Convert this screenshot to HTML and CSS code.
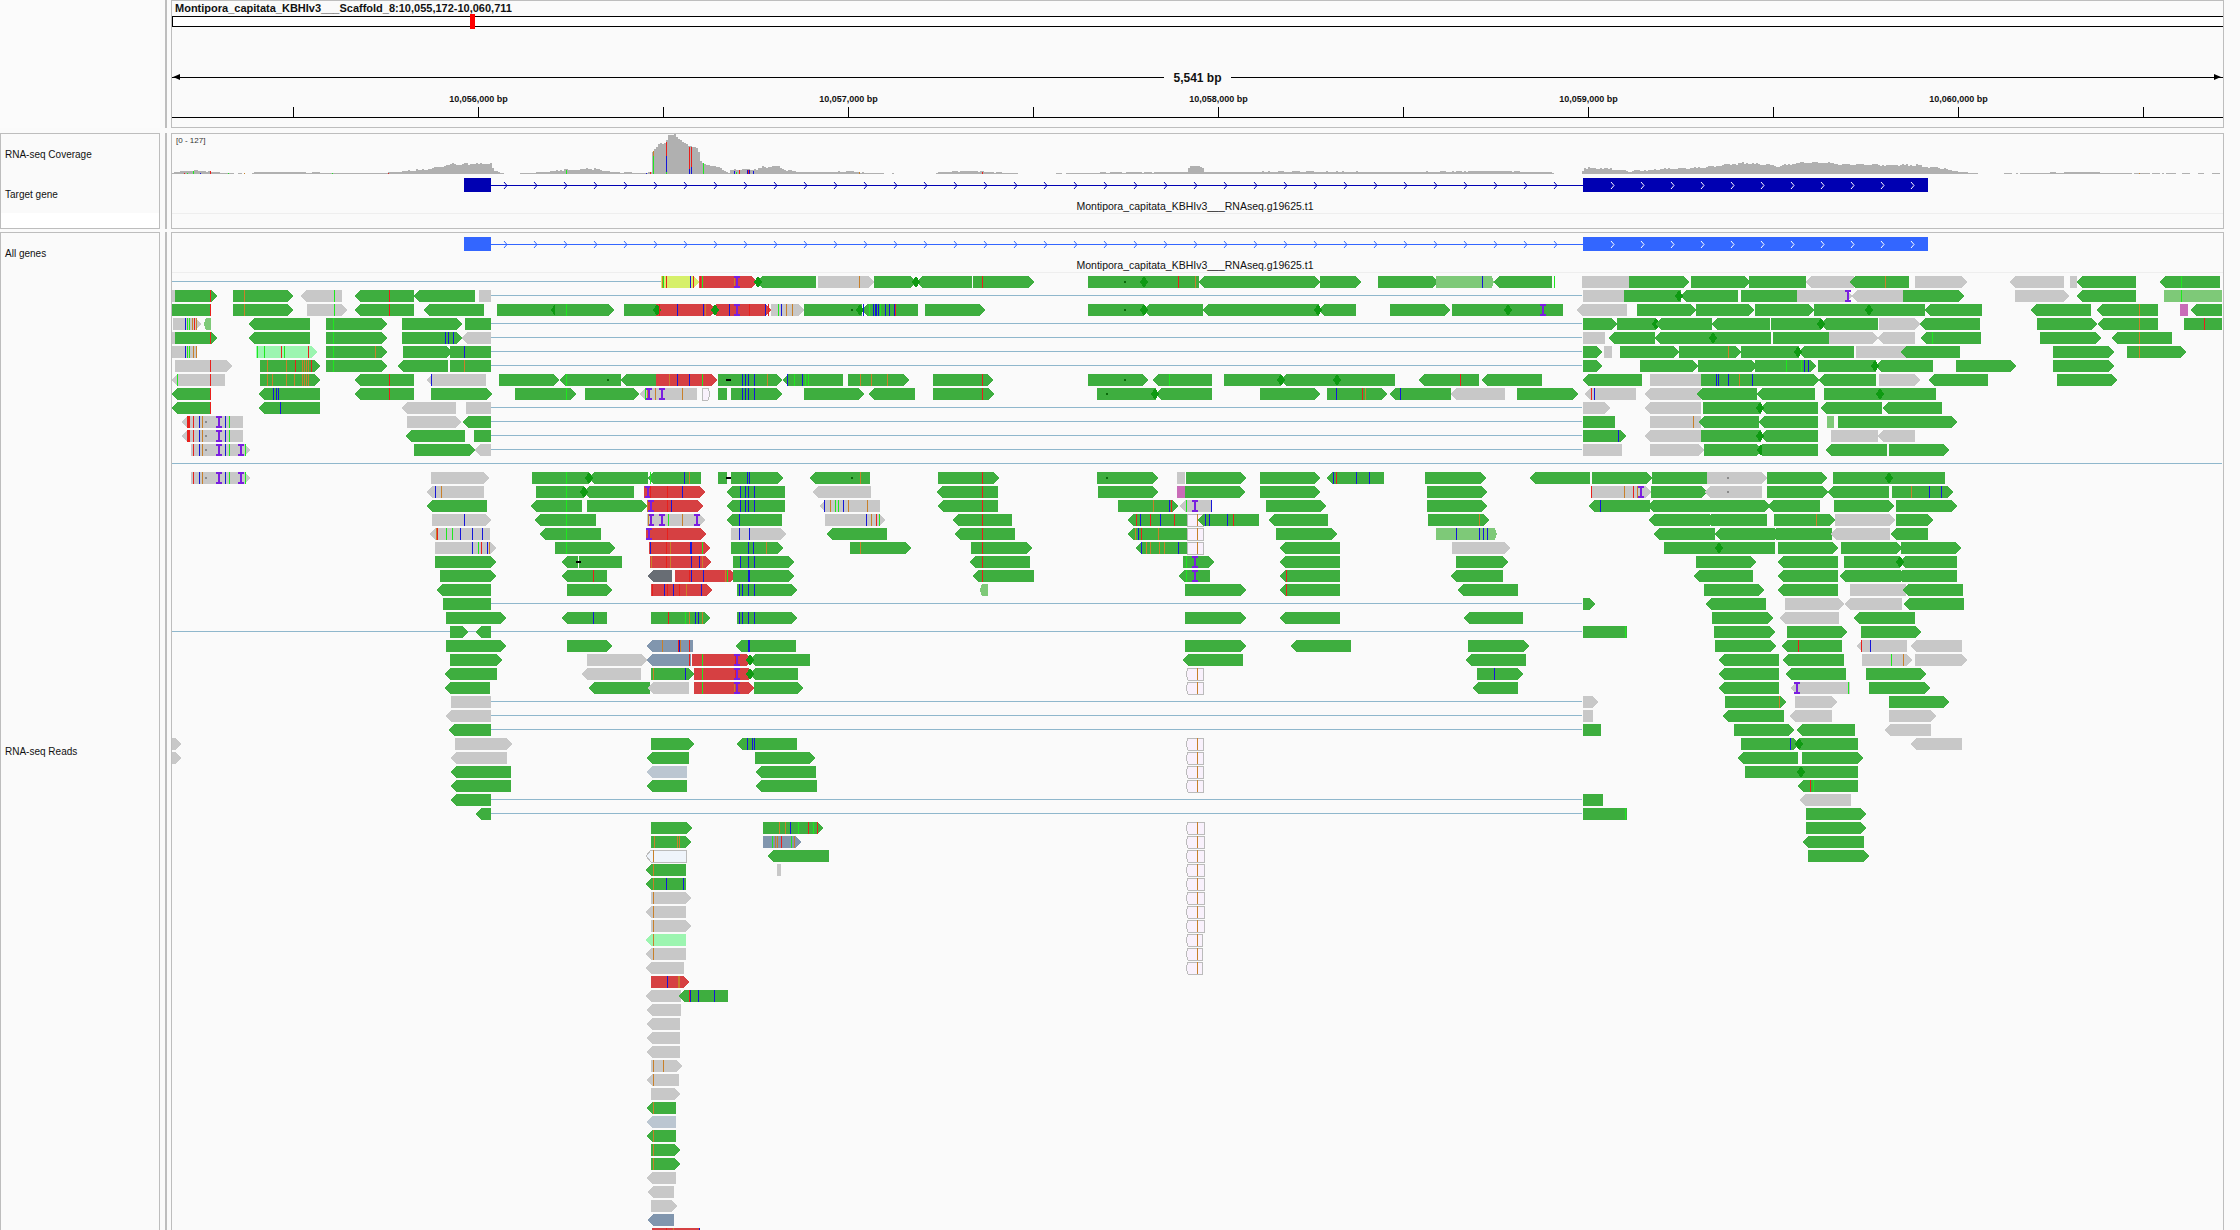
FILE: index.html
```html
<!DOCTYPE html>
<html lang="en">
<head>
<meta charset="utf-8">
<title>IGV</title>
<link rel="stylesheet" href="styles.css">
</head>
<body>
<main class="igv">
  <section class="row row--header">
    <div class="names names--plain"></div>
    <div class="splitter"></div>
    <div class="panel">
      <div class="locus">Montipora_capitata_KBHIv3___Scaffold_8:10,055,172-10,060,711</div>
      <div class="ideogram"><span class="ideogram-mark"></span></div>
      <div class="span">
        <span class="span-line span-line--left"></span>
        <span class="span-label">5,541 bp</span>
        <span class="span-line span-line--right"></span>
      </div>
      <svg class="ruler" viewBox="172 84 2051 34" aria-label="ruler">
        <g class="ruler-text">
          <text x="478.5" y="102">10,056,000 bp</text>
          <text x="848.5" y="102">10,057,000 bp</text>
          <text x="1218.5" y="102">10,058,000 bp</text>
          <text x="1588.5" y="102">10,059,000 bp</text>
          <text x="1958.5" y="102">10,060,000 bp</text>
        </g>
        <path class="ruler-line" d="M293.5 107V117M478.5 107V117M663.5 107V117M848.5 107V117M1033.5 107V117M1218.5 107V117M1403.5 107V117M1588.5 107V117M1773.5 107V117M1958.5 107V117M2143.5 107V117M172 117.5H2223"/>
      </svg>
    </div>
  </section>

  <section class="row row--genes">
    <div class="names names--boxed">
      <div class="name-row">RNA-seq Coverage</div>
      <div class="name-row">Target gene</div>
      <div class="name-rest"></div>
    </div>
    <div class="splitter"></div>
    <div class="panel">
      <div class="coverage">
        <span class="coverage-range">[0 - 127]</span>
        <svg id="coverage" class="track-svg" viewBox="172 134 2051 40"></svg>
      </div>
      <div class="gene-track">
        <svg id="target-gene" class="track-svg" data-y="174" viewBox="172 174 2051 39"></svg>
      </div>
    </div>
  </section>

  <section class="row row--reads">
    <div class="names names--boxed">
      <div class="name-row">All genes</div>
      <div class="name-grow">RNA-seq Reads</div>
    </div>
    <div class="splitter"></div>
    <div class="panel">
      <div class="gene-track">
        <svg id="all-genes" class="track-svg" data-y="233" viewBox="172 233 2051 39"></svg>
      </div>
      <svg id="reads" class="reads" viewBox="172 273 2051 957"></svg>
    </div>
  </section>
</main>
<script src="reads.js"></script>
</body>
</html>
```
FILE: styles.css
```css
* { box-sizing: border-box; }
html, body { margin: 0; height: 100%; overflow: hidden; background: #fafafa; }
body { font-family: "Liberation Sans", Arial, sans-serif; color: #111; }
.igv { display: flex; flex-direction: column; width: 2240px; height: 1230px; overflow: hidden; }
.row { display: flex; flex: none; }
.row--header { height: 128px; margin-bottom: 5px; }
.row--genes { height: 96px; margin-bottom: 3px; }
.row--reads { height: 1000px; }

.names { width: 160px; flex: none; display: flex; flex-direction: column; font-size: 10px; }
.names--plain { background: #fbfbfb; }
.names--boxed { border: 1px solid #bdbdbd; }
.name-row { height: 40px; flex: none; display: flex; align-items: center; padding-left: 4px; }
.name-rest { flex: 1; background: #fff; margin-top: -1px; }
.name-grow { height: 957px; flex: none; display: flex; align-items: center; padding-left: 4px; }

.splitter { width: 2px; flex: none; margin: 0 4px 0 5px; background: #bdbdbd; }
.panel { width: 2053px; flex: none; border: 1px solid #bdbdbd; overflow: hidden; }

.locus { height: 14px; line-height: 14px; padding-left: 3px; font-size: 11px; font-weight: 700; margin-bottom: 1px; }
.ideogram { position: relative; height: 11px; background: #fff; border: 1px solid #000; border-right: 0; }
.ideogram-mark { position: absolute; left: 297px; top: -3px; width: 5px; height: 15px; background: #f00; }

.span { display: flex; align-items: center; height: 13px; margin-top: 44px; }
.span-line { position: relative; height: 1px; background: #000; }
.span-line--left { flex: 0 0 992px; }
.span-line--right { flex: 1; }
.span-line--left::before, .span-line--right::after {
  content: ""; position: absolute; top: -3px; border: 3.5px solid transparent;
}
.span-line--left::before { left: 1px; border-left-width: 0; border-right: 7px solid #000; }
.span-line--right::after { right: 2px; border-right-width: 0; border-left: 7px solid #000; }
.span-label { flex: 0 0 67px; text-align: center; font-size: 12px; font-weight: 700; line-height: 13px; padding-top: 2px; }

.ruler { display: block; width: 2051px; height: 34px; }
.ruler-text { font-size: 9px; font-weight: 700; text-anchor: middle; fill: #111; }
.ruler-line { stroke: #000; stroke-width: 1; fill: none; }

.coverage { position: relative; height: 40px; }
.coverage-range { position: absolute; left: 4px; top: 1px; font-size: 8px; line-height: 11px; color: #333; }
.track-svg { display: block; width: 2051px; height: 100%; shape-rendering: crispEdges; }
.gene-track { height: 40px; border-bottom: 1px solid #eee; }
.gene-name { font-size: 10.5px; text-anchor: middle; fill: #111; }

.reads { display: block; width: 2051px; height: 957px; shape-rendering: crispEdges; }

.cov { fill: #b0b0b0; }
.target .exon { fill: #0000b2; }
.target .intron, .target .chev { stroke: #0000b2; }
.all .exon { fill: #3366ff; }
.all .intron, .all .chev { stroke: #3366ff; }
.intron { stroke-width: 1; fill: none; }
.chev { stroke-width: 1; fill: none; shape-rendering: auto; }
.chev--in { stroke: #fff !important; }
.skip { stroke: #8fb7cc; stroke-width: 1; }

.c-g { fill: #3eae3f; }
.c-y { fill: #c8c8c8; }
.c-r { fill: #d64042; }
.c-Y { fill: #d6f06a; }
.c-L { fill: #7ec978; }
.c-M { fill: #9cf5b0; }
.c-s { fill: #8196ae; }
.c-S { fill: #bbc6d1; }
.c-K { fill: #686d74; }
.c-P { fill: #c96cb8; }
.c-O { fill: #f9f1fc; stroke: #bbb; stroke-width: 1; }
.c-W { fill: #eff4fb; stroke: #bbb; stroke-width: 1; }

.m-r { fill: #e8201c; }
.m-b { fill: #1616d8; }
.m-G { fill: #1fe81f; }
.m-o { fill: #c8802a; }
.m-x { fill: #000; }
.m-d { fill: #0a6a0a; }
.m-y { fill: #8a8a8a; }
.m-I { fill: #7a1ee0; }
.m-D { fill: #0e9a12; }
```
FILE: reads.js
```js
// Alignment data: one block per horizontal window. Each row holds reads as
// "start end direction colour marks...", using the window's own coordinates.
var BLOCKS = [
  { x0: 600, s: 3, rows: {
    0: "183 297 > Y o185 G190 r198 b270 r278|297 472 > r r300 G307 o403 I410|470 648 < g D473|654 822 > y o778|822 948 > g|950 1116 < g D948|1119 1302 > g r1147"
  }},
  { x0: 160, s: 2.24, rows: {
    1: "27 40 - y|34 128 > g r112|164 298 > g o188|316 408 < y G389|436 569 < g r512|569 706 < g|715 741 - y",
    2: "27 114 - g r112|164 298 > g o188|329 419 > y G389|436 569 < g r512|592 726 < g|755 885 - g D885|885 1017 > g G910|1039 1112 - g|1112 1245 > r D1113 r1117 b1159 b1217 o1220|1245 1368 > r D1243 b1275 I1292 r1320 b1355 r1362|1368 1443 > y G1385 b1392 o1402 o1415|1443 1572 - g d1549",
    3: "29 92 > y b55 G60 G64 o72 r76 o80|98 114 < L|200 336 < g|372 508 > g G388|542 676 > g|683 741 - g",
    4: "27 40 - y|34 128 > g r112|200 336 < g|372 508 > g G388|542 676 > g b638 b646 b656|677 741 < y",
    5: "27 82 - y b55 G60 G66 o75 o80|215 352 > M G218 G233 r270 G277 r332|372 508 > g G388 o482|544 655 > g|650 741 - g b682",
    6: "34 161 > y r111|224 358 > g o240 o282 r303 o318 o322 o326 o332 r339|372 508 > g G388|534 645 < g|650 741 - g o682",
    7: "27 146 < y G39 r111|224 358 > g o240 o250 o282 o300 o318 o322 o326 o332|436 569 < g r512|597 730 < y b607|759 894 > g|897 1033 < g G910 d1004|1033 1110 < g|1111 1248 > r o1141 b1159 b1186 G1215|1250 1270 - g|1267 1279 - g|1279 1393 > g b1303 b1311 b1318 b1330 o1360|1396 1530 < g b1405 G1420 b1437 G1445 G1452 x1273",
    8: "27 114 < g r112|222 358 < g b253 b259 b265|436 569 < g r512|607 744 > g|795 932 > g G910|952 1073 > g|1075 1203 < y o1090 G1086 I1095 o1108 I1125 o1170|1215 1233 > O|1250 1270 - g|1279 1393 > g b1303 b1311 b1318 b1330|1443 1577 > g",
    9: "27 114 < g r112|222 358 < g b269|541 663 < y|685 741 - y",
    10: "50 186 < y r60 r63 r66 r74 b88 o95 y104 I132 b145 G155|553 675 > y|679 741 < g",
    11: "50 186 < y r60 r63 r66 r74 b88 o95 y104 I132 b145 G155|550 683 < g|703 741 - g",
    12: "69 202 > y r74 b88 o95 y104 I132 b145 G155 I182 G190|569 706 > g|706 741 < y",
    14: "69 202 > y r74 b88 o95 y104 I132 b145 G155 I182 G190|607 737 > y|833 960 - g G910|960 1092 < g D962|1092 1212 < g G1098 b1173 o1184|1250 1270 - g|1279 1396 > g b1315 b1320 x1273|1455 1590 < g d1549 o1567",
    15: "597 726 < y b615 o630|842 950 - g G910|950 1062 < g D950|1085 1221 > r I1092 r1097 r1135 b1170|1270 1400 < g b1300 b1310 b1318 b1330|1463 1593 < y",
    16: "598 732 < g|832 945 < g G910|956 1090 > g|1090 1216 > r I1100 o1090 r1135 b1145|1270 1400 < g b1300 b1310 b1318 b1330|1478 1613 < y b1488 o1500 G1512 G1518 b1531 o1542 o1583",
    17: "609 741 > y b682|840 977 < g G910|1090 1220 > y I1100 o1093 I1125 G1138 o1170 I1203|1270 1393 < g b1298|1490 1624 > y b1581 o1593 r1603 G1610",
    18: "604 739 < y o618 r620 G640 G655 b672 b700 b722|852 988 < g G910|1088 1223 > r I1095 r1135|1279 1402 > y b1298 b1320|1495 1628 < g o1567",
    19: "616 752 > y b700 G712 o718 r720 b732 o738|885 1019 > g G910|1095 1232 > r b1097 r1134 o1143 b1187 b1190 G1215|1279 1396 > g b1316 b1328 o1358",
    20: "616 752 > g|901 936 < g|939 1035 - g x937|1098 1234 > r o1100 r1134 o1143 b1190 b1208 o1215|1284 1420 > g b1300 b1318 b1330",
    21: "627 752 > g|901 1001 < g r969|1094 1147 < K|1154 1290 > r r1185 b1190 b1217 o1265 G1270|1284 1420 > g b1316 b1320",
    22: "621 741 < g|912 1012 > g|1100 1236 > r r1101 b1128 r1135 b1148 r1163 o1178 b1211|1292 1427 > g b1297 b1298 b1303 b1318 b1330",
    23: "634 741 - g",
    24: "641 775 > g|901 1001 < g b969|1100 1232 > g r1139 G1175 o1185 b1198 b1205 o1215|1292 1427 > g b1297 b1298 b1303 b1318 b1330",
    25: "650 690 > g|707 741 < g",
    26: "641 775 > g|912 1012 > g|1090 1194 < s o1125 r1160 b1163 o1165 r1184|1290 1425 < g b1316 b1320",
    27: "650 765 > g|956 1090 > y|1090 1189 < s r1186|1192 1326 > r r1213 G1215 r1287 I1292|1322 1456 < g D1322",
    28: "639 755 < g|946 1077 < y|1100 1196 > g o1105 b1177|1196 1330 > r r1213 G1215 r1287 I1292|1322 1429 < g D1322",
    29: "639 739 < g|962 1097 < g|1092 1185 < y|1196 1331 > r r1213 G1215 o1285 I1292|1331 1440 > g",
    30: "652 741 - y",
    31: "641 741 < y",
    32: "648 741 < g",
    33: "27 46 > y|661 788 > y|1100 1196 > g|1293 1427 < g b1314 b1325 b1330",
    34: "27 46 > y|651 777 < y|1090 1185 < g|1333 1467 > g",
    35: "652 786 < g|1090 1180 < S|1334 1469 < g",
    36: "652 786 < g|1090 1180 < g|1336 1472 < g",
    37: "652 741 < g",
    38: "707 741 < g"
  }},
  { x0: 840, s: 2.24, rows: {
    0: "556 682 - g d638|682 805 - g D682 r758 o795|805 940 < g|940 1075 > g|1075 1167 > g|1205 1340 > g|1335 1465 > L b1437|1465 1595 < g G1600",
    2: "50 175 < g D45 b52 G64 b75 b78 b81 b84 G90 b100 b110 b120 r123|190 325 > g|556 682 - g d638|682 812 < g D682|812 940 < g|940 1072 - g|1072 1156 < g D1070|1232 1366 > g|1371 1620 - g D1496 I1575",
    7: "18 155 > g o44 o70 o106|208 343 > g r319|556 690 > g d638|700 833 < g G736|860 988 - g|988 1117 < g D988|1117 1243 - g D1113|1298 1431 < g r1388|1437 1572 < g",
    8: "0 54 > g|65 168 < g|208 345 > g r319|576 708 - g d598|708 833 < g D706|941 1075 > g|1091 1225 > g b1111 r1170 o1175|1233 1369 < g b1255|1369 1490 < y",
    14: "220 356 > g r319|576 712 > g d598|755 773 - y|775 909 > g|941 1075 > g|1090 1219 < g b1105 r1111 b1155 b1186|1310 1447 > g",
    15: "0 69 - y|218 354 < g r319|578 712 > g|755 773 - P|773 907 > g|941 1075 > g|1315 1449 > g",
    16: "220 354 < g r319|623 757 > g o700 b738 r742|762 832 < y G776 I795 b830|954 1088 > g|1315 1449 > g",
    17: "252 385 < g r319|646 778 < g r662 b672 r695 b717 r748|778 814 - O o799|802 939 < g b818 b827 b866 r881|960 1093 < g|1317 1454 > g o1432",
    18: "0 105 - g|258 392 < g r319|646 778 < g o660 b668 r675 o713|778 814 - O o799|977 1113 > g|1335 1471 > L b1379 b1432 b1440 b1450",
    19: "22 159 > g o44|293 430 > g r319|663 778 < g b675 o685 o695 o715 o725 b756|778 814 - O o799|985 1120 < g|1371 1501 > y",
    20: "291 426 < g r319|768 838 > g G775 I795|985 1120 < g|1380 1496 > g",
    21: "298 435 < g r319|760 829 < g G775 I795|985 1120 < g r998|1369 1485 < g",
    22: "314 332 < L|773 909 > g|985 1120 < g r998|1385 1519 < g",
    24: "773 909 > g|985 1120 < g|1397 1530 < g",
    26: "773 909 > g|1011 1145 < g|1407 1543 > g",
    27: "769 903 < g|1403 1537 < g",
    28: "776 814 < O o799|1427 1530 > g b1464",
    29: "776 814 < O o799|1417 1519 < g",
    33: "776 814 < O o799",
    34: "776 814 < O o799",
    35: "776 814 < O o799",
    36: "776 814 < O o799"
  }},
  { x0: 1500, s: 2.119, rows: {
    0: "174 273 - y|273 400 > g|405 530 > g|528 648 - g|648 750 < y|742 867 < g o816|879 990 > y|1080 1195 < y|1207 1222 - y|1222 1348 < g|1398 1526 < g G1444",
    1: "176 263 - y|263 383 - g|383 504 < g D380|511 630 - g|630 745 > y I737|745 853 < y|854 983 > g|1091 1206 > y|1222 1348 < g|1407 1530 - L G1444",
    2: "163 269 < y|290 415 > g|415 538 > g|540 665 > g|665 782 - g|782 900 - g D782|900 1021 < g|1125 1252 < g|1265 1394 < g o1354|1441 1458 - P|1465 1530 < g",
    3: "176 248 > g|248 330 - g D330|330 450 < g|450 573 < g|575 680 - g|680 801 < g D680|803 890 > y|890 1017 < g|1138 1266 > g|1268 1394 < g o1354|1449 1530 - g r1491",
    4: "176 222 - y|230 328 < g|328 457 < g|457 575 - g D452|578 697 - g|697 800 > y|800 879 < y|893 1019 < g G916|1144 1273 > g|1296 1424 < g o1354",
    5: "176 216 > g|220 237 - y|254 380 > g|380 510 > g o484|511 633 - g|633 750 < g D632|754 860 - y|850 975 < g|1172 1301 > g|1329 1454 > g o1354",
    6: "176 216 > g|297 420 > g|420 545 > g|540 670 > g G605 G638 b645 b652|674 797 - g|797 917 < g D795|966 1093 > g|1172 1301 > g",
    7: "175 301 < g|318 426 - y|426 548 - g b458 b461 b484 o507 b534|548 675 > g|675 797 < g|803 890 > y|908 1034 < g|1180 1307 > g",
    8: "36 165 > g|180 288 < y r192 b200|308 426 < y|418 545 < g|545 667 < g|687 805 - g|805 924 - g D805",
    9: "176 233 > y|308 426 < y|430 553 - g|553 674 < g D551|680 809 < g|811 937 < g",
    10: "176 244 - g|318 426 - y o410|421 548 < g|548 674 < g|692 708 - L|716 840 - g|840 968 > g",
    11: "176 267 > g b251|308 425 < y|426 552 - g|552 674 < g D551|701 800 - y|800 879 < y"
  }},
  { x0: 1540, s: 2.24, rows: {
    12: "96 184 - y|246 367 > y|367 497 > g D495|497 623 - g|641 777 < g|782 916 > g",
    14: "-22 113 < g|116 250 > g|250 377 - g|375 508 > y y421|508 643 > g|656 907 - g D782",
    15: "115 248 > y r115 o188 r208 I226 o218|249 375 > g|370 497 < y y421|508 644 > g|646 782 < g|788 925 > g o830 b872 b899",
    16: "110 246 < g b135|243 380 < g|381 515 > g|511 627 < g|659 793 > g|797 934 > g",
    17: "244 380 < g|372 508 < g|524 661 > g o618|661 795 > y|797 880 > g",
    18: "256 392 < g|393 527 < g|518 654 < g|651 785 < y|787 869 < g",
    19: "278 526 - g D402|533 668 > g|674 810 > g|809 943 > g",
    20: "349 484 > g|532 668 < g|681 807 - g|807 934 < g D807",
    21: "344 477 < g|534 668 < g|672 808 < g|800 934 < g",
    22: "367 502 > g|534 668 < g|694 820 - y|812 948 < g",
    23: "96 123 > g|372 506 < g|549 681 > y|684 811 < y|816 950 < g",
    24: "385 522 > g|538 670 < y|704 840 < g",
    25: "96 195 - g G191|390 526 > g|553 688 > g|719 853 > g",
    26: "392 528 > g|543 676 < g r579|709 822 < y r720 b740|830 945 < y",
    27: "402 535 < g|545 681 < g|721 833 > y G787 o814|840 956 > y",
    28: "402 535 < g|552 685 < g|730 865 > g",
    29: "402 535 < g|562 694 < y I575 G691|737 874 > g",
    30: "96 130 > y|414 551 > g o535|571 665 > y|782 916 > g",
    31: "96 119 - y|411 547 < g|561 654 < y|782 887 > y",
    32: "96 137 - g|435 569 > g|575 706 < g|772 876 < y",
    33: "450 581 > g b559|581 712 - g D581|830 945 < y",
    34: "444 578 < g|587 724 > g",
    35: "459 585 - g|585 712 - g D585",
    36: "577 712 < g r604 G612",
    37: "96 141 - g|583 697 < y",
    38: "96 195 - g G191|596 730 > g",
    39: "596 730 > g",
    40: "590 726 < g",
    41: "600 737 > g"
  }},
  { x0: 620, s: 2.529, rows: {
    39: "78 182 > g|362 513 > g o403 o417 b431 G449 r476 G488 r497|1432 1476 < O o1458",
    40: "78 180 > g o85 o143 o150|362 458 > s G385 o392 o396 r408 G432 o440|1432 1476 < O o1458",
    41: "66 168 < W o84|374 529 < g|1432 1476 < O o1458",
    42: "66 167 < g o84|397 407 - y|1432 1476 < O o1458",
    43: "66 167 < g o84 b117 b160|1432 1476 < O o1458",
    44: "78 180 > y o84|1432 1476 < O o1458",
    45: "66 167 < y o84|1432 1476 < O o1458",
    46: "78 180 > y o84|1432 1476 < O o1458",
    47: "66 167 < M o84|1432 1473 < O o1458",
    48: "66 167 < y o84|1432 1473 < O o1458",
    49: "66 162 < y|1432 1473 < O o1458",
    50: "78 175 > r b119 o146 o150",
    51: "66 155 < y|150 273 < g r175 b178 b196 b237",
    52: "68 154 < y",
    53: "68 152 < y",
    54: "68 152 < y",
    55: "68 152 < y",
    56: "78 158 > y o84 o110",
    57: "68 149 < y o84",
    58: "78 152 > y",
    59: "68 142 < g o84",
    60: "68 142 < S",
    61: "68 142 < g o84",
    62: "78 152 > g o84",
    63: "78 152 > g o84",
    64: "68 142 < y",
    65: "71 137 < y",
    66: "78 144 > y",
    67: "71 137 < s",
    68: "80 212 > r r117 o135 b200"
  }}
];

// Spliced gaps: [row, from x, to x].
var SKIPS = [[0,172,661],[13,172,2222],[25,172,1582]].concat(
  [1,3,4,5,6,9,10,11,12,23,30,31,32,37,38].map(function (r) { return [r, 491, 1582]; })
);

var ROW_TOP = 276, ROW_PITCH = 14, ROW_H = 12, TIP = 5;

function px(block, v) { return Math.round(block.x0 + v / block.s); }

function readShape(x1, x2, y, dir, cls) {
  var b = y + ROW_H, m = y + ROW_H / 2, pts;
  var tip = (cls === "O" || cls === "L") ? 2 : TIP;
  if (dir === ">") pts = [x1,y, x2-tip,y, x2,m, x2-tip,b, x1,b];
  else if (dir === "<") pts = [x1+tip,y, x2,y, x2,b, x1+tip,b, x1,m];
  else pts = [x1,y, x2,y, x2,b, x1,b];
  return '<polygon class="c-' + cls + '" points="' + pts.join(" ") + '"/>';
}

function mark(type, x, y) {
  var m = y + ROW_H / 2;
  function rect(rx, ry, w, h) {
    return '<rect class="m-' + type + '" x="' + rx + '" y="' + ry + '" width="' + w + '" height="' + h + '"/>';
  }
  if (type === "I") return rect(x - 1, y, 2, ROW_H) + rect(x - 3, y, 6, 2) + rect(x - 3, y + ROW_H - 2, 6, 2);
  if (type === "D") return '<polygon class="m-D" points="' + [x-4,m, x,m-6, x+4,m, x,m+6].join(" ") + '"/>';
  if (type === "d" || type === "y") return rect(x - 1, m - 1, 2, 2);
  if (type === "x") return rect(x - 2, m - 1, 5, 2);
  return rect(x, y, 1, ROW_H);
}

function drawReads() {
  var html = SKIPS.map(function (s) {
    var y = ROW_TOP + s[0] * ROW_PITCH + 5.5;
    return '<line class="skip" x1="' + s[1] + '" x2="' + s[2] + '" y1="' + y + '" y2="' + y + '"/>';
  }).join("");
  BLOCKS.forEach(function (block) {
    Object.keys(block.rows).forEach(function (row) {
      var y = ROW_TOP + row * ROW_PITCH;
      block.rows[row].split("|").forEach(function (read) {
        var t = read.split(" ");
        html += readShape(px(block, +t[0]), px(block, +t[1]), y, t[2], t[3]);
        t.slice(4).forEach(function (k) {
          html += mark(k.charAt(0), px(block, +k.slice(1)), y);
        });
      });
    });
  });
  document.getElementById("reads").innerHTML = html;
}

// Coverage outline: [x, height] knots, roughened with a small repeatable jitter.
var COV = [[172,1.5],[185,3],[192,3.5],[200,3],[212,2],[235,.6],[250,0],[253,2],[320,1.5],[330,1],[383,1],[407,3],[430,5],[452,10],[490,10],[493,3],[507,0],[531,1],[565,4],[593,5],[612,2],[643,1],
  [650,2],[651,22],[653,23],[658,29],[665,32],[668,38],[675,39],[680,34],[688,28],[697,26],[700,12],[703,10],[713,8],[722,5],[728,1],[730,4],[757,5],[763,7],[777,8],[783,5],[797,2],[833,2],[850,3],[860,1.5],[905,0],[933,.5],[943,2],[970,3],[997,1.5],[1027,0],[1090,1],[1097,1.5],
  [1186,2],[1190,8],[1200,8],[1204,2],[1300,2.5],[1400,2],[1500,3],[1552,1.5],[1553,0],[1581,0],[1583,6],[1599,6],[1627,3],[1651,4],[1656,5],[1698,6],[1722,9],[1745,11],[1778,8],[1807,12],[1840,10],[1878,9],[1915,9],[1944,5],[1962,2],[1981,0],[2036,1],[2061,1.5],[2090,2],[2109,1],[2156,.6],[2220,.5]
];

var COV_MARKS = [[184,0,1,"r"],[187,0,1,"G"],[193,0,3,"G"],[200,0,1,"b"],[210,0,3,"r"],[228,0,1,"G"],[244,0,1,"o"],[332,0,1,"G"],[388,0,1,"r"],[566,0,4,"G"],
  [646,0,1,"b"],[650,0,2,"r"],[653,0,18,"G"],[653,18,23,"o"],[666,0,2,"G"],[666,2,18,"b"],[666,18,32,"r"],[689,0,5,"b"],[689,5,27,"r"],[691,0,7,"b"],[691,7,27,"r"],[703,0,11,"G"],[734,0,3,"b"],[736,0,2,"G"],[739,0,4,"r"],[747,0,4,"b"],[748,0,4,"r"],[749,0,4,"b"],[753,0,3,"b"],[859,0,2,"o"],[982,0,2,"r"],[2139,0,1,"o"]];

function covHeight(x, seed) {
  var i = 1;
  while (i < COV.length - 1 && COV[i][0] < x) i++;
  var a = COV[i - 1], b = COV[i];
  var t = Math.max(0, Math.min(1, (x - a[0]) / ((b[0] - a[0]) || 1)));
  var h = a[1] + (b[1] - a[1]) * t;
  var noise = (Math.sin(seed * 12.9898) * 43758.5453) % 1;
  return h < .4 ? 0 : Math.max(0, Math.round(h + noise * (h > 3 ? 0.9 : 0.35)));
}

function drawCoverage() {
  var base = 174, d = "M172 " + base, html = "";
  for (var x = 172; x < 2222; x += 2) {
    d += "V" + (base - covHeight(x, x)) + "H" + (x + 2);
  }
  d += "V" + base + "Z";
  html = '<path class="cov" d="' + d + '"/>';
  COV_MARKS.forEach(function (m) {
    html += '<rect class="m-' + m[3] + '" x="' + m[0] + '" y="' + (base - m[2]) + '" width="1" height="' + (m[2] - m[1]) + '"/>';
  });
  document.getElementById("coverage").innerHTML = html;
}

function drawGene(id, kind) {
  var svg = document.getElementById(id), top = +svg.dataset.y + 4, mid = top + 7;
  var html = '<g class="' + kind + '">';
  html += '<line class="intron" x1="491" x2="1583" y1="' + (mid + .5) + '" y2="' + (mid + .5) + '"/>';
  html += '<rect class="exon" x="464" y="' + top + '" width="27" height="14"/>';
  html += '<rect class="exon" x="1583" y="' + top + '" width="345" height="14"/>';
  var x, chev = function (cx, extra) {
    return '<path class="chev' + extra + '" d="M' + (cx - 1) + " " + (mid - 3) + "l3 3.5l-3 3.5" + '"/>';
  };
  for (x = 505; x < 1580; x += 30) html += chev(x, "");
  for (x = 1612; x < 1920; x += 30) html += chev(x, " chev--in");
  html += '</g><text class="gene-name" x="1195" y="' + (mid + 25) + '">Montipora_capitata_KBHIv3___RNAseq.g19625.t1</text>';
  svg.innerHTML = html;
}

drawCoverage();
drawGene("target-gene", "target");
drawGene("all-genes", "all");
drawReads();
```
